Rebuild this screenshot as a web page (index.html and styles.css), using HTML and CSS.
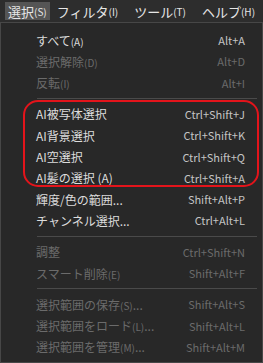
FILE: index.html
```html
<!DOCTYPE html>
<html lang="ja">

<head>
  <meta charset="UTF-8">
  <meta name="viewport" content="width=device-width, initial-scale=1.0">
  <title>選択メニュー</title>
  <link rel="stylesheet" href="styles.css">
</head>

<body>
  <div class="menubar">
    <span class="menubar-item active">選択<small>(S)</small></span>
    <span class="menubar-item">フィルタ<small>(I)</small></span>
    <span class="menubar-item">ツール<small>(T)</small></span>
    <span class="menubar-item">ヘルプ<small>(H)</small></span>
  </div>

  <div class="menu">
    <div class="row"><span class="label">すべて<small>(A)</small></span><span class="key">Alt+A</span></div>
    <div class="row off"><span class="label">選択解除<small>(D)</small></span><span class="key">Alt+D</span></div>
    <div class="row off"><span class="label">反転<small>(I)</small></span><span class="key">Alt+I</span></div>
    <div class="sep"></div>

    <div class="group">
      <div class="row"><span class="label">AI被写体選択</span><span class="key">Ctrl+Shift+J</span></div>
      <div class="row"><span class="label">AI背景選択</span><span class="key">Ctrl+Shift+K</span></div>
      <div class="row"><span class="label">AI空選択</span><span class="key">Ctrl+Shift+Q</span></div>
      <div class="row"><span class="label">AI髪の選択 (A)</span><span class="key">Ctrl+Shift+A</span></div>
    </div>

    <div class="row"><span class="label">輝度/色の範囲...</span><span class="key">Shift+Alt+P</span></div>
    <div class="row"><span class="label">チャンネル選択...</span><span class="key">Ctrl+Alt+L</span></div>
    <div class="sep"></div>
    <div class="row off"><span class="label">調整</span><span class="key">Ctrl+Shift+N</span></div>
    <div class="row off"><span class="label">スマート削除<small>(E)</small></span><span class="key">Shift+Alt+F</span></div>
    <div class="sep"></div>
    <div class="row off"><span class="label">選択範囲の保存<small>(S)</small>...</span><span class="key">Shift+Alt+S</span></div>
    <div class="row off"><span class="label">選択範囲をロード<small>(L)</small>...</span><span class="key">Shift+Alt+L</span></div>
    <div class="row off"><span class="label">選択範囲を管理<small>(M)</small>...</span><span class="key">Shift+Alt+M</span></div>
  </div>
</body>

</html>
```

FILE: styles.css
```css
html,
body {
  margin: 0;
  padding: 0;
  width: 100%;
  height: 100%;
  background-color: #2b2b2b;
}

body {
  font-family: "Noto Sans CJK JP", "Noto Sans", sans-serif;
  font-size: 12px;
  color: #dcdcdc;
}

small {
  font-size: 10px;
}

/* メニューバー */
.menubar {
  display: flex;
  align-items: center;
  height: 22px;
  padding-left: 5px;
  background-color: #2d2d2d;
}

.menubar-item {
  display: flex;
  flex-shrink: 0;
  align-items: center;
  height: 18px;
  padding: 0 3px;
  margin-right: 10px;
  font-size: 13px;
  white-space: nowrap;
  color: #e6e6e6;
}

.menubar-item.active {
  margin-right: 4px;
  background-color: #555;
}

/* ドロップダウン */
.menu {
  height: 341px;
  box-sizing: border-box;
  padding-top: 6.4px;
  border: 1px solid #474747;
  background-color: #282828;
}

.row {
  display: flex;
  align-items: center;
  justify-content: space-between;
  height: 21.3px;
  padding: 0 17px 0 35px;
  white-space: nowrap;
}

.key {
  font-size: 11px;
  color: #c4c4c4;
}

.row.off .label,
.row.off .key {
  color: #6b6b6b;
}

.sep {
  height: 1px;
  margin: 4.5px 5px 4.5px 36px;
  background-color: #4a4a4a;
}

/* 赤い囲み */
.group {
  position: relative;
}

.group::after {
  content: "";
  position: absolute;
  top: -3.5px;
  bottom: 1px;
  left: 22px;
  right: 3px;
  border: 2px solid #e3141b;
  border-radius: 15px;
}
```
